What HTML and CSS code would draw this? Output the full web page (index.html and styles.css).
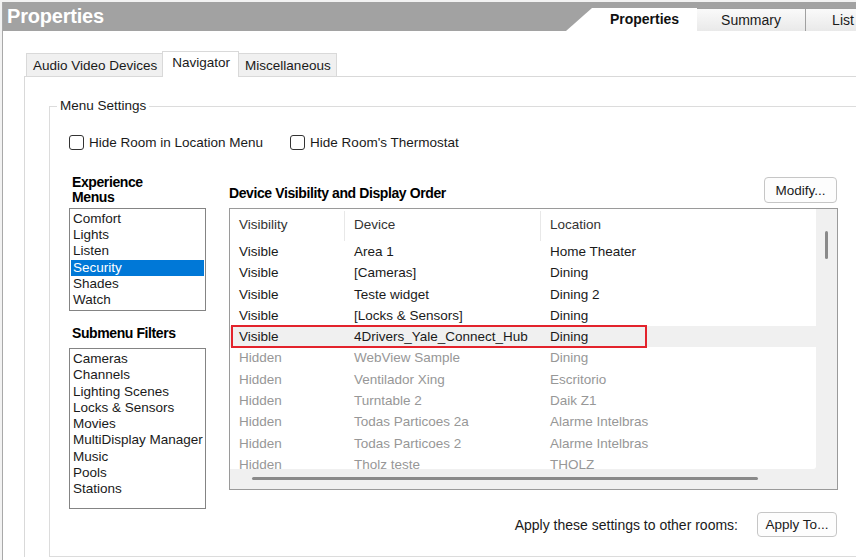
FILE: index.html
```html
<!DOCTYPE html>
<html lang="en">
<head>
  <meta charset="UTF-8" />
  <title>Properties</title>
  <link rel="stylesheet" href="styles.css">
</head>
<body>
<div class="window">

  <div class="titlebar">
    <div class="title">Properties</div>
    <div class="top-tabs">
      <div class="top-tab active">Properties</div>
      <div class="top-tab">Summary</div>
      <div class="top-tab">List View</div>
    </div>
  </div>

  <div class="content">
    <div class="tabs">
      <div class="tab">Audio Video Devices</div>
      <div class="tab selected">Navigator</div>
      <div class="tab">Miscellaneous</div>
    </div>

    <div class="panel">
      <fieldset class="group">
        <legend>Menu Settings</legend>
        <div class="group-body">

          <div class="checks">
            <label class="check"><span class="box"></span>Hide Room in Location Menu</label>
            <label class="check"><span class="box"></span>Hide Room's Thermostat</label>
          </div>

          <div class="columns">
            <div class="left-col">
              <div class="caption two-line">Experience<br>Menus</div>
              <ul class="listbox menus">
                <li>Comfort</li>
                <li>Lights</li>
                <li>Listen</li>
                <li class="sel">Security</li>
                <li>Shades</li>
                <li>Watch</li>
              </ul>

              <div class="caption sub">Submenu Filters</div>
              <ul class="listbox filters">
                <li>Cameras</li>
                <li>Channels</li>
                <li>Lighting Scenes</li>
                <li>Locks &amp; Sensors</li>
                <li>Movies</li>
                <li>MultiDisplay Manager</li>
                <li>Music</li>
                <li>Pools</li>
                <li>Stations</li>
              </ul>
            </div>

            <div class="right-col">
              <div class="right-head">
                <div class="caption">Device Visibility and Display Order</div>
                <button class="btn modify">Modify...</button>
              </div>

              <div class="listview">
                <div class="lv-body">
                  <div class="lv-row lv-header">
                    <div class="sep">Visibility</div>
                    <div class="sep">Device</div>
                    <div>Location</div>
                  </div>
                  <div class="lv-row"><div>Visible</div><div>Area 1</div><div>Home Theater</div></div>
                  <div class="lv-row"><div>Visible</div><div>[Cameras]</div><div>Dining</div></div>
                  <div class="lv-row"><div>Visible</div><div>Teste widget</div><div>Dining 2</div></div>
                  <div class="lv-row"><div>Visible</div><div>[Locks &amp; Sensors]</div><div>Dining</div></div>
                  <div class="lv-row current"><div>Visible</div><div>4Drivers_Yale_Connect_Hub</div><div>Dining</div><span class="marker"></span></div>
                  <div class="lv-row hidden"><div>Hidden</div><div>WebView Sample</div><div>Dining</div></div>
                  <div class="lv-row hidden"><div>Hidden</div><div>Ventilador Xing</div><div>Escritorio</div></div>
                  <div class="lv-row hidden"><div>Hidden</div><div>Turntable 2</div><div>Daik Z1</div></div>
                  <div class="lv-row hidden"><div>Hidden</div><div>Todas Particoes 2a</div><div>Alarme Intelbras</div></div>
                  <div class="lv-row hidden"><div>Hidden</div><div>Todas Particoes 2</div><div>Alarme Intelbras</div></div>
                  <div class="lv-row hidden"><div>Hidden</div><div>Tholz teste</div><div>THOLZ</div></div>
                </div>
                <div class="vscroll"><span class="vthumb"></span></div>
                <div class="hscroll"><span class="hthumb"></span></div>
                <div class="corner"></div>
              </div>

              <div class="apply-row">
                <span>Apply these settings to other rooms:</span>
                <button class="btn apply">Apply To...</button>
              </div>
            </div>
          </div>

        </div>
      </fieldset>
    </div>
  </div>

</div>
</body>
</html>
```

FILE: styles.css
```css
* { box-sizing: border-box; margin: 0; padding: 0; }
html, body {
  width: 856px; height: 560px;
  overflow: hidden;
  background: #f2f2f2;
  font-family: 'Liberation Sans', Arial, sans-serif;
  font-size: 13.5px;
  color: #1a1a1a;
}
.window {
  margin: 2px 0 0 2px;
  height: 558px;
  border-left: 1px solid #a9a9a9;
  background: #fff;
}

/* title bar */
.titlebar {
  height: 29px;
  background: #a2a2a2;
  display: flex;
  justify-content: space-between;
  align-items: flex-end;
}
.title {
  align-self: center;
  padding-left: 4px;
  color: #fff;
  font-size: 20px;
  font-weight: bold;
  letter-spacing: -0.2px;
}
.top-tabs {
  display: flex;
  align-items: flex-end;
  height: 23px;
  margin-right: -59px;
}
.top-tab {
  width: 109px;
  height: 23px;
  line-height: 22px;
  text-align: center;
  font-size: 14px;
  background: linear-gradient(#fafafa, #e9e9e9);
  border: 1px solid #a0a0a0;
  border-bottom: none;
  border-left: none;
}
.top-tab.active {
  width: 131px;
  padding-left: 26px;
  background: #fff;
  border: none;
  font-weight: bold;
  color: #111;
  clip-path: polygon(0 100%, 26px 0, 100% 0, 100% 100%);
}

/* inner tabs */
.content {
  padding: 20px 0 0 21px;
}
.tabs {
  display: flex;
  align-items: flex-end;
  height: 25px;
  padding-left: 2px;
}
.tab {
  height: 23px;
  line-height: 24px;
  padding: 0 5px 0 6px;
  background: #f0f0f0;
  border: 1px solid #d9d9d9;
  border-bottom: none;
  margin-right: -1px;
}
.tab.selected {
  position: relative;
  z-index: 1;
  height: 26px;
  line-height: 22px;
  margin-bottom: -1px;
  padding: 0 8px 0 9px;
  background: #fff;
}
.panel {
  border-top: 1px solid #d9d9d9;
  border-left: 1px solid #d9d9d9;
  padding: 21px 0 0 24px;
}

/* group box */
.group {
  width: 900px;
  border: 1px solid #dcdcdc;
}
.group legend {
  margin-left: 7px;
  padding: 0 3px;
  line-height: 16px;
}
.group-body {
  padding: 0 0 19px 19px;
}
.checks {
  display: flex;
  gap: 27px;
  margin-top: 20px;
  height: 16px;
}
.check {
  display: flex;
  align-items: center;
  gap: 5px;
}
.box {
  width: 15px; height: 15px;
  border: 1px solid #333;
  border-radius: 3px;
  background: #fff;
}

.columns {
  display: flex;
  gap: 23px;
  margin-top: 25px;
}
.caption {
  font-weight: bold;
  font-size: 14px;
  color: #000;
  line-height: 16px;
  letter-spacing: -0.4px;
}
.left-col .caption { padding-left: 3px; }
.caption.two-line { line-height: 15px; }
.caption.sub { margin-top: 14px; }

.left-col { width: 137px; }
.listbox {
  list-style: none;
  border: 1px solid #848484;
  padding: 2px 1px;
  margin-top: 3px;
}
.listbox li {
  line-height: 16.2px;
  padding-left: 2px;
  white-space: nowrap;
}
.listbox li.sel {
  background: #0078d7;
  color: #fff;
}
.menus { height: 103px; }
.filters { height: 161px; margin-top: 7px; }
.filters li { line-height: 16.3px; }

/* right column */
.right-col { width: 609px; }
.right-head {
  height: 33px;
  display: flex;
  justify-content: space-between;
  align-items: flex-end;
}
.right-head .caption { padding-bottom: 7px; }
.btn {
  font-family: inherit;
  font-size: 13.5px;
  color: #1a1a1a;
  background: #fdfdfd;
  border: 1px solid #c6c6c6;
  border-radius: 4px;
}
.modify {
  width: 73px; height: 26px;
  margin: 0 1px 5px 0;
}

.listview {
  height: 282px;
  border: 1px solid #9a9a9a;
  background: #f0f0f0;
  display: grid;
  grid-template-columns: 1fr 21px;
  grid-template-rows: 1fr 20px;
}
.lv-body {
  background: #fff;
  overflow: hidden;
  border-bottom-right-radius: 3px;
}
.lv-row {
  position: relative;
  display: grid;
  grid-template-columns: 115px 196px 1fr;
  line-height: 21.3px;
  white-space: nowrap;
}
.lv-row div { padding-left: 9px; }
.lv-header {
  height: 32px;
  line-height: 32px;
  color: #333;
}
.lv-header .sep {
  border-right: 1px solid #e8e8e8;
  height: 30px;
  margin-top: 2px;
  line-height: 28px;
}
.lv-row.hidden { color: #979797; }
.lv-row.current { background: #f0f0f0; }
.marker {
  position: absolute;
  left: 1px; top: -1px;
  width: 416px; height: 23px;
  border: 2px solid #e3232c;
}
.vscroll {
  display: flex;
  justify-content: center;
  padding-top: 22px;
}
.vthumb {
  width: 3px; height: 28px;
  border-radius: 2px;
  background: #8a8a8a;
}
.hscroll {
  padding: 8px 0 0 22px;
}
.hthumb {
  display: block;
  width: 506px; height: 3px;
  border-radius: 2px;
  background: #8a8a8a;
}

.apply-row {
  display: flex;
  justify-content: flex-end;
  align-items: center;
  gap: 19px;
  margin-top: 22px;
  font-size: 14px;
}
.apply {
  width: 80px; height: 25px;
  margin-right: 1px;
}
```
